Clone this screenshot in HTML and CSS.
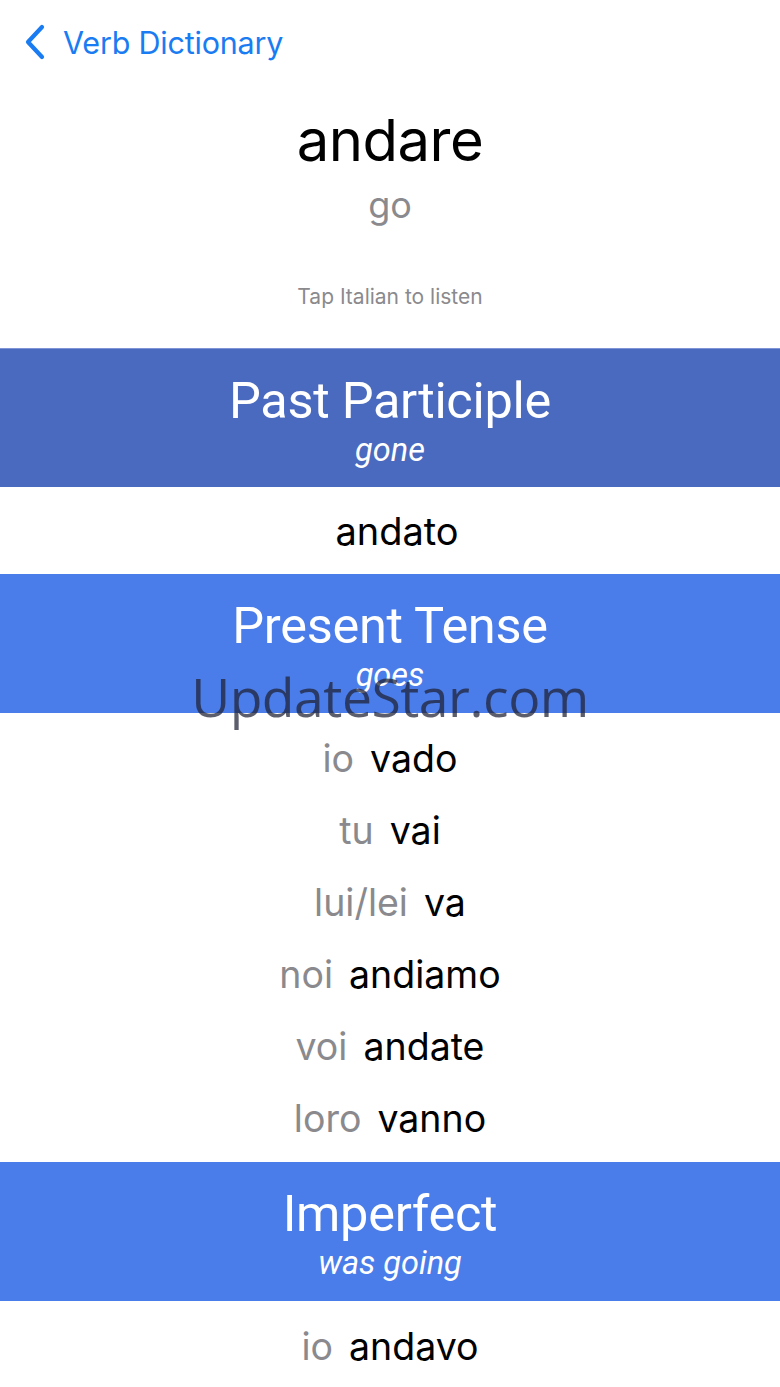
FILE: index.html
```html
<!DOCTYPE html>
<html>
<head>
<meta charset="utf-8">
<link rel="stylesheet" href="styles.css">
</head>
<body>
<div class="page">
  <nav class="nav">
    <svg class="chev" width="22" height="36" viewBox="0 0 22 36"><path d="M18 3 L4 18 L18 33" fill="none" stroke="#1a7cf2" stroke-width="4.2" stroke-linecap="round" stroke-linejoin="round"/></svg>
    <span class="nav-title">Verb Dictionary</span>
  </nav>
  <header class="hero">
    <div class="verb">andare</div>
    <div class="gloss">go</div>
    <div class="hint">Tap Italian to listen</div>
  </header>

  <section class="band band-dark">
    <div class="band-title">Past Participle</div>
    <div class="band-sub">gone</div>
  </section>
  <div class="single">andato</div>

  <section class="band">
    <div class="band-title">Present Tense</div>
    <div class="band-sub">goes</div>
  </section>
  <div class="list">
    <div class="row"><span class="pro">io</span><span class="form">vado</span></div>
    <div class="row"><span class="pro">tu</span><span class="form">vai</span></div>
    <div class="row"><span class="pro">lui/lei</span><span class="form">va</span></div>
    <div class="row"><span class="pro">noi</span><span class="form">andiamo</span></div>
    <div class="row"><span class="pro">voi</span><span class="form">andate</span></div>
    <div class="row"><span class="pro">loro</span><span class="form">vanno</span></div>
  </div>

  <section class="band">
    <div class="band-title">Imperfect</div>
    <div class="band-sub">was going</div>
  </section>
  <div class="list list-last">
    <div class="row"><span class="pro">io</span><span class="form">andavo</span></div>
  </div>

  <div class="watermark">UpdateStar.com</div>
</div>
</body>
</html>
```

FILE: styles.css
```css
* { box-sizing: border-box; }
html, body { margin: 0; padding: 0; background: #fff; }
body { font-family: "Inter", "Roboto", "Liberation Sans", sans-serif; overflow: hidden; }
.page { position: relative; width: 780px; height: 1387px; overflow: hidden; }

.nav { height: 85px; display: flex; align-items: center; padding-left: 24px; gap: 17px; padding-bottom: 1px; }
.chev { display: block; }
.nav-title { color: #1a7cf2; font-size: 30.5px; letter-spacing: -0.2px; }

.hero { display: flex; flex-direction: column; align-items: center; padding-top: 20px; }
.verb { font-size: 58px; line-height: 70px; color: #000; letter-spacing: -0.5px; }
.gloss { font-size: 36px; line-height: 44px; color: #8a8a8e; margin-top: 8px; }
.hint { font-size: 21px; line-height: 24px; color: #8a8a8e; margin-top: 58px; margin-bottom: 39px; }

.band { height: 139px; background: #4a7de9; color: #fff; display: flex; flex-direction: column; align-items: center; padding-top: 23px; font-family: "Roboto", "Liberation Sans", sans-serif; }
.band-dark { background: #4a6abf; border-top: 1px solid #7d95d6; }
.band-title { font-size: 50.5px; line-height: 58px; font-weight: 400; letter-spacing: -0.3px; }
.band-sub { font-size: 32.5px; line-height: 38px; font-style: italic; margin-top: 1px; }

.single { height: 87px; display: flex; align-items: center; justify-content: center; font-size: 38px; color: #000; padding-left: 14px; }

.list { padding: 9px 0 8px; }
.row { height: 72px; display: flex; align-items: center; justify-content: center; gap: 16px; font-size: 37.5px; }
.pro { color: #8a8a8e; }
.form { color: #000; }

.watermark { position: absolute; left: 0; right: 0; top: 662px; text-align: center; font-size: 53.5px; line-height: 70px; color: rgba(30, 32, 50, 0.72); font-family: "Open Sans", "Noto Sans", sans-serif; letter-spacing: -0.5px; pointer-events: none; }
```
